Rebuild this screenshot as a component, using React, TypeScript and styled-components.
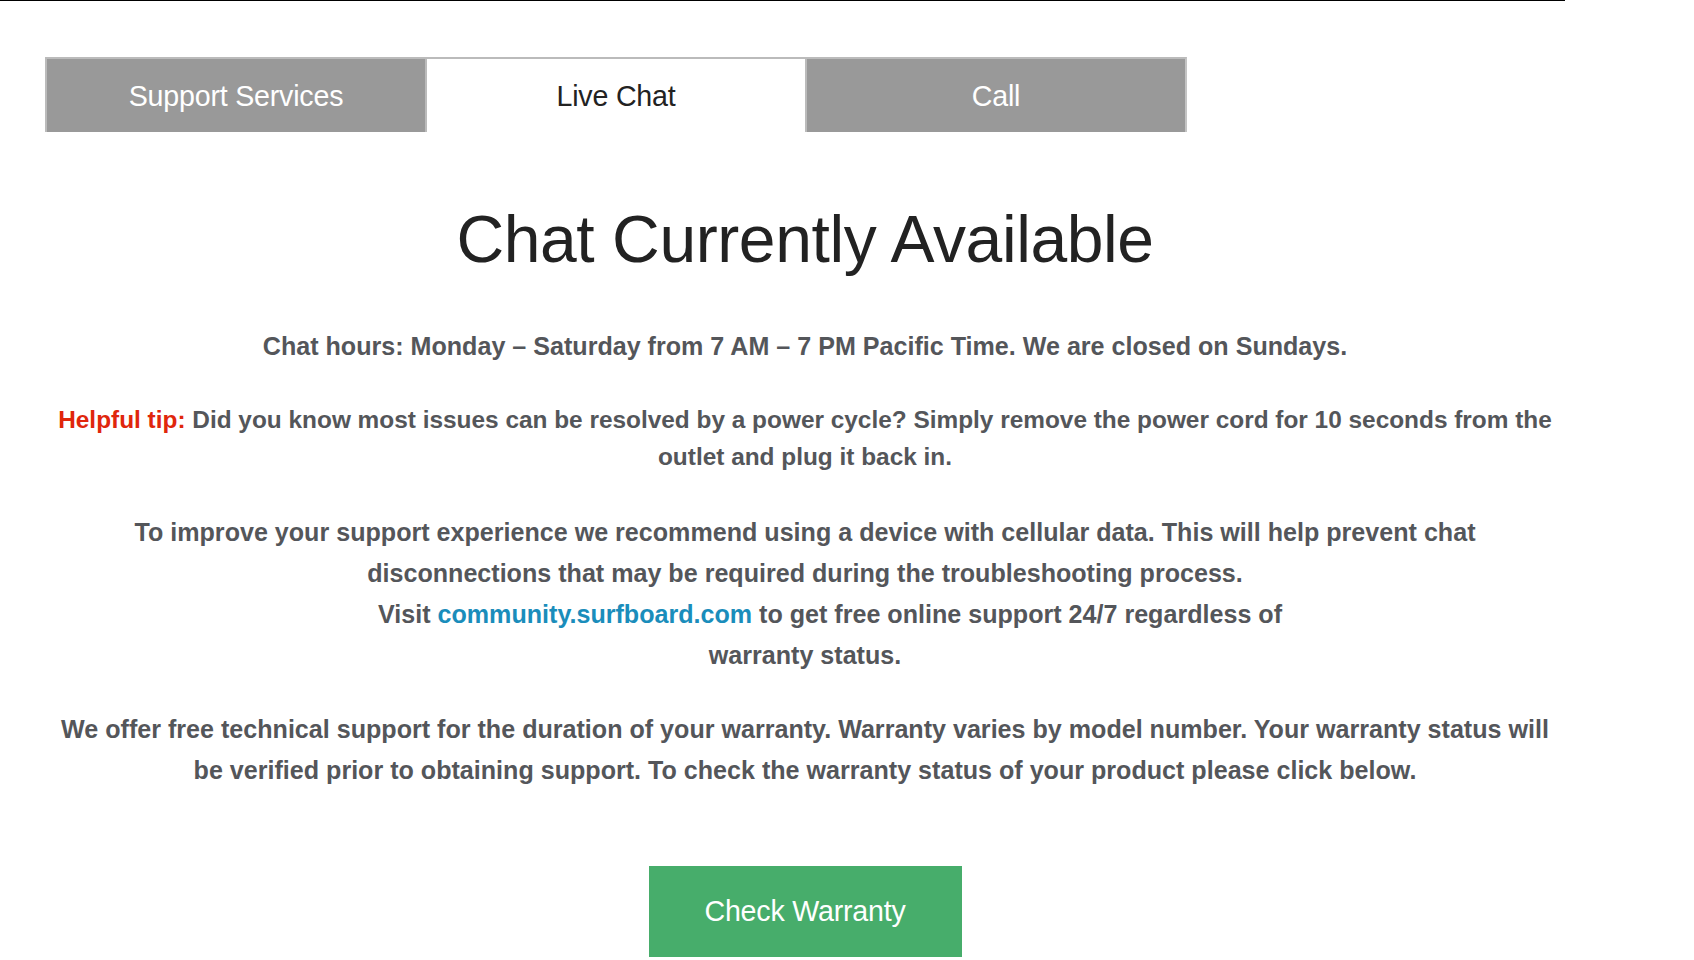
import styled, { createGlobalStyle } from "styled-components";

const GlobalStyle = createGlobalStyle`
  html, body {
    margin: 0;
    padding: 0;
    background: #fff;
    font-family: "Liberation Sans", Arial, Helvetica, sans-serif;
  }
`

const Page = styled.div`
  width: 1565px;
  border-top: 1px solid #000;
  padding: 0 0 0 45px;
  box-sizing: border-box;
`

const TabBar = styled.div`
  display: flex;
  width: 1142px;
  margin-top: 56px;
`

const Tab = styled.div<{ $active?: boolean; $last?: boolean }>`
  flex: 1;
  height: 75px;
  box-sizing: border-box;
  display: flex;
  align-items: center;
  justify-content: center;
  padding-top: 2px;
  font-size: 28.6px;
  letter-spacing: -0.2px;
  border-top: 2px solid #bbb;
  border-left: 2px solid #bbb;
  border-right: ${(p) => (p.$last ? "2px solid #c4c4c4" : "none")};
  background: ${(p) => (p.$active ? "#fff" : "#999")};
  color: ${(p) => (p.$active ? "#222" : "#fff")};
`

const Content = styled.div`
  display: flex;
  flex-direction: column;
  align-items: center;
  text-align: center;
`

const Heading = styled.h1`
  margin: 67px 0 0;
  font-size: 66px;
  line-height: 80px;
  font-weight: 400;
  letter-spacing: -0.4px;
  color: #222;
`

const Para = styled.p<{ $gap: number; $lh: number; $size: number }>`
  margin: ${(p) => p.$gap}px 0 0;
  font-size: ${(p) => p.$size}px;
  font-weight: 700;
  line-height: ${(p) => p.$lh}px;
  color: #54565a;
  white-space: nowrap;
`

const Tip = styled.span`
  color: #e0260c;
`

const Link = styled.a`
  color: #1a8dbb;
  text-decoration: none;
`

const ShiftedLine = styled.span`
  padding-left: 50px;
`

const WarrantyButton = styled.button`
  margin-top: 75px;
  width: 313px;
  height: 91px;
  border: none;
  background: #47ad6b;
  color: #fff;
  font-family: inherit;
  font-size: 28.6px;
  letter-spacing: -0.2px;
  cursor: pointer;
`

export default function App() {
  return (
    <>
      <GlobalStyle />
      <Page>
        <TabBar>
          <Tab>Support Services</Tab>
          <Tab $active>Live Chat</Tab>
          <Tab $last>Call</Tab>
        </TabBar>
        <Content>
          <Heading>Chat Currently Available</Heading>
          <Para $gap={47} $lh={41} $size={25.1}>
            Chat hours: Monday – Saturday from 7 AM – 7 PM Pacific Time. We are closed on Sundays.
          </Para>
          <Para $gap={34} $lh={37} $size={24.4}>
            <Tip>Helpful tip:</Tip> Did you know most issues can be resolved by a power cycle? Simply remove the power cord for 10 seconds from the
            <br />
            outlet and plug it back in.
          </Para>
          <Para $gap={37} $lh={41} $size={25.1}>
            To improve your support experience we recommend using a device with cellular data. This will help prevent chat
            <br />
            disconnections that may be required during the troubleshooting process.
            <br />
            <ShiftedLine>
              Visit <Link href="#">community.surfboard.com</Link> to get free online support 24/7 regardless of
            </ShiftedLine>
            <br />
            warranty status.
          </Para>
          <Para $gap={33} $lh={41} $size={25.1}>
            We offer free technical support for the duration of your warranty. Warranty varies by model number. Your warranty status will
            <br />
            be verified prior to obtaining support. To check the warranty status of your product please click below.
          </Para>
          <WarrantyButton>Check Warranty</WarrantyButton>
        </Content>
      </Page>
    </>
  )
}
